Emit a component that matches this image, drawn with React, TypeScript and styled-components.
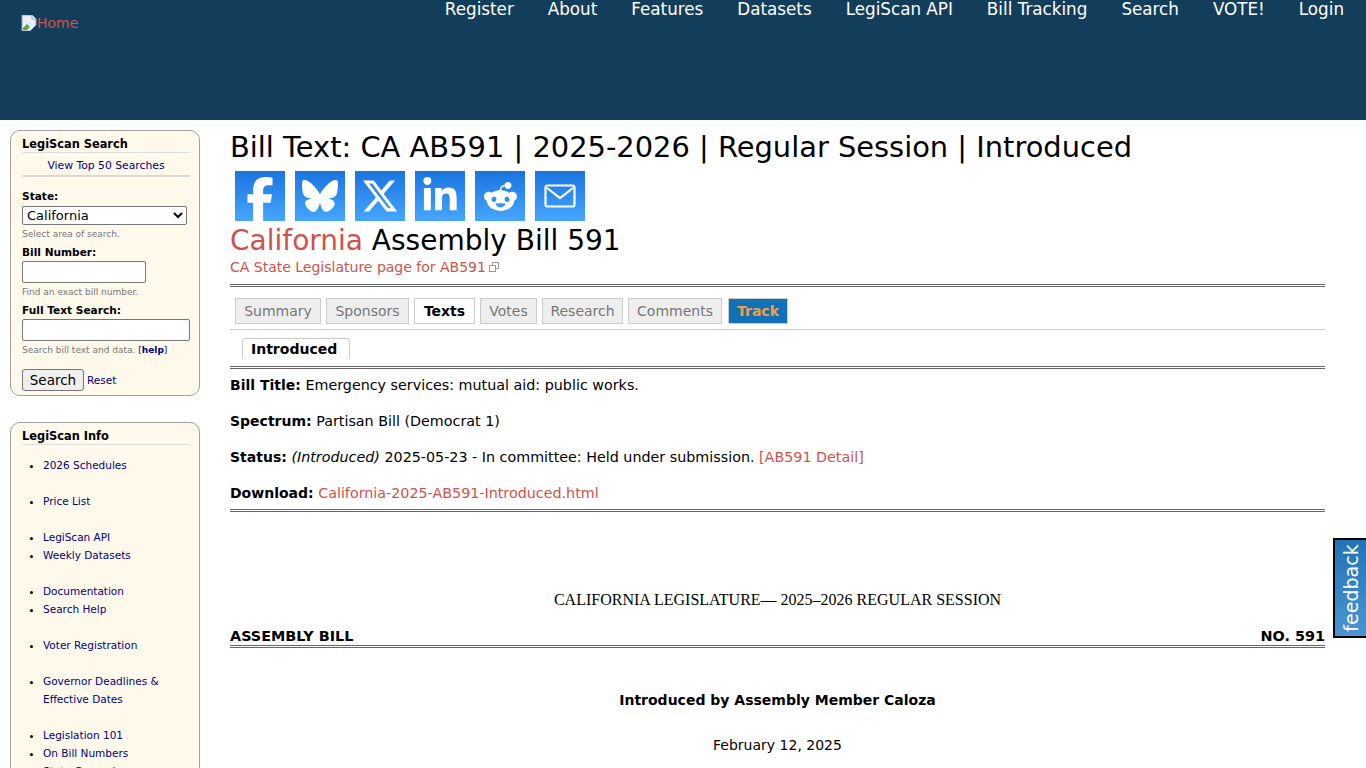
import React from "react";
import styled, { createGlobalStyle } from "styled-components";
import { FaFacebookF, FaBluesky, FaXTwitter, FaLinkedinIn, FaRedditAlien } from "react-icons/fa6";

const GlobalStyle = createGlobalStyle`
  html, body {
    margin: 0;
    padding: 0;
    height: 768px;
    overflow: hidden;
    background: #ffffff;
  }
  body {
    font-family: "DejaVu Sans", Verdana, sans-serif;
    font-size: 14px;
    line-height: 18px;
    color: #000000;
  }
`;

const navItems = ["Register", "About", "Features", "Datasets", "LegiScan API", "Bill Tracking", "Search", "VOTE!", "Login"];
const tabs = [
  { name: "Summary", width: 86 },
  { name: "Sponsors", width: 83 },
  { name: "Texts", width: 61 },
  { name: "Votes", width: 57 },
  { name: "Research", width: 81 },
  { name: "Comments", width: 94 },
];
const shareIcons = [
  { key: "fb", icon: <FaFacebookF size={44} />, low: true },
  { key: "bs", icon: <FaBluesky size={36} /> },
  { key: "x", icon: <FaXTwitter size={38} /> },
  { key: "li", icon: <FaLinkedinIn size={38} /> },
  { key: "rd", icon: <FaRedditAlien size={33} /> },
  {
    key: "mail",
    icon: (
      <svg width="32" height="24" viewBox="0 0 32 24" fill="none" stroke="#fff" strokeWidth="2.2">
        <rect x="1.5" y="1.5" width="29" height="21" rx="2" />
        <path d="M3 4l13 10L29 4" />
      </svg>
    ),
  },
];
const infoGroups = [
  ["2026 Schedules"],
  ["Price List"],
  ["LegiScan API", "Weekly Datasets"],
  ["Documentation", "Search Help"],
  ["Voter Registration"],
  ["Governor Deadlines & Effective Dates"],
  ["Legislation 101", "On Bill Numbers", "State General"],
];

export default function App() {
  return (
    <>
      <GlobalStyle />
      <Header>
        <HomeLink href="#">
          <BrokenImage viewBox="0 0 16 16">
            <path d="M1 0h10l4 4v6L9 16H1z" fill="#e8eefc" stroke="#9aa5b1" strokeWidth="1" />
            <path d="M2 13l4-4 3 3-3 3H2z" fill="#5aa93c" />
            <path d="M11 0v4h4" fill="#fff" stroke="#9aa5b1" />
          </BrokenImage>
          Home
        </HomeLink>
        <Nav>
          {navItems.map((item) => (
            <NavLink href="#" key={item}>{item}</NavLink>
          ))}
        </Nav>
      </Header>

      <Page>
        <Sidebar>
          <Box>
            <BoxTitle>LegiScan Search</BoxTitle>
            <TopSearches href="#">View Top 50 Searches</TopSearches>
            <FieldLabel $gap={13}>State:</FieldLabel>
            <StateSelect defaultValue="California">
              <option>California</option>
            </StateSelect>
            <Hint>Select area of search.</Hint>
            <FieldLabel $gap={6}>Bill Number:</FieldLabel>
            <TextInput $width={124} />
            <Hint>Find an exact bill number.</Hint>
            <FieldLabel $gap={6}>Full Text Search:</FieldLabel>
            <TextInput $width={168} />
            <Hint>Search bill text and data. <HelpLink href="#">[<b>help</b>]</HelpLink></Hint>
            <SearchRow>
              <SearchButton>Search</SearchButton>
              <SideLink href="#">Reset</SideLink>
            </SearchRow>
          </Box>
          <Box>
            <BoxTitle>LegiScan Info</BoxTitle>
            {infoGroups.map((group) => (
              <InfoList key={group[0]}>
                {group.map((item) => (
                  <li key={item}><SideLink href="#">{item}</SideLink></li>
                ))}
              </InfoList>
            ))}
          </Box>
        </Sidebar>

        <Main>
          <Title>Bill Text: CA AB591 | 2025-2026 | Regular Session | Introduced</Title>
          <ShareRow>
            {shareIcons.map((item) => (
              <ShareButton href="#" key={item.key} $low={item.low}>{item.icon}</ShareButton>
            ))}
          </ShareRow>
          <BillHeading><RedLink href="#">California</RedLink> Assembly Bill 591</BillHeading>
          <StateLink href="#">
            CA State Legislature page for AB591
            <ExtIcon viewBox="0 0 10 10">
              <rect x="3.5" y="0.5" width="6" height="6" fill="none" stroke="#999" />
              <rect x="0.5" y="3.5" width="6" height="6" fill="#fff" stroke="#999" />
            </ExtIcon>
          </StateLink>
          <DoubleRule $top={8} />
          <TabBar>
            {tabs.map((tab) => (
              <Tab key={tab.name} $active={tab.name === "Texts"} $width={tab.width}>{tab.name}</Tab>
            ))}
            <TrackTab>Track</TrackTab>
          </TabBar>
          <SubTabBar>
            <SubTab>Introduced</SubTab>
          </SubTabBar>
          <DoubleRule $top={0} />
          <Details>
            <p><b>Bill Title:</b> Emergency services: mutual aid: public works.</p>
            <p><b>Spectrum:</b> Partisan Bill (Democrat 1)</p>
            <p><b>Status:</b> <i>(Introduced)</i> 2025-05-23 - In committee: Held under submission. <RedLink href="#">[AB591 Detail]</RedLink></p>
            <p><b>Download:</b> <RedLink href="#">California-2025-AB591-Introduced.html</RedLink></p>
          </Details>
          <DoubleRule $top={7} />
          <Session>CALIFORNIA LEGISLATURE— 2025–2026 REGULAR SESSION</Session>
          <BillRow>
            <span>ASSEMBLY BILL</span>
            <span>NO. 591</span>
          </BillRow>
          <DoubleRule $top={0} />
          <Author>Introduced by Assembly Member Caloza</Author>
          <BillDate>February 12, 2025</BillDate>
        </Main>
      </Page>

      <Feedback href="#"><span>feedback</span></Feedback>
    </>
  );
}

const Header = styled.header`
  display: flex;
  justify-content: space-between;
  height: 120px;
  background: #133e5b;
  padding: 0 22px 0 21px;
`;

const HomeLink = styled.a`
  display: flex;
  align-items: center;
  align-self: flex-start;
  height: 16px;
  margin-top: 15px;
  color: #d0524a;
  font-size: 14px;
  text-decoration: none;
`;

const BrokenImage = styled.svg`
  width: 16px;
  height: 16px;
  flex: none;
`;

const Nav = styled.nav`
  display: flex;
  gap: 34px;
`;

const NavLink = styled.a`
  color: #ffffff;
  font-size: 16.75px;
  line-height: 19px;
  text-decoration: none;
`;

const Page = styled.div`
  display: flex;
  align-items: flex-start;
  gap: 30px;
  padding: 10px 41px 0 10px;
`;

const Sidebar = styled.aside`
  display: flex;
  flex-direction: column;
  gap: 26px;
  width: 190px;
  flex: none;
`;

const Box = styled.section`
  box-sizing: border-box;
  background: #fff9ec;
  border: 1px solid #a0a0a0;
  border-radius: 10px;
  padding: 5px 9px 4px 11px;
  font-size: 10.5px;
`;

const BoxTitle = styled.div`
  font-size: 11.4px;
  font-weight: bold;
  line-height: 15px;
  padding-top: 1px;
  border-bottom: 1px solid #dddddd;
`;

const TopSearches = styled.a`
  display: block;
  padding-top: 3px;
  text-align: center;
  color: #000080;
  font-size: 10.8px;
  text-decoration: none;
  line-height: 19px;
  border-bottom: 2px solid #d8d8d0;
`;

const FieldLabel = styled.div<{ $gap: number }>`
  font-weight: bold;
  font-size: 10.6px;
  line-height: 12px;
  margin-top: ${(p) => p.$gap}px;
`;

const StateSelect = styled.select`
  display: block;
  box-sizing: border-box;
  width: 165px;
  height: 19px;
  margin-top: 4px;
  padding: 0;
  font-family: "DejaVu Sans", sans-serif;
  font-size: 13px;
  background: #ffffff;
  border: 1px solid #767676;
  border-radius: 2px;
`;

const TextInput = styled.input<{ $width: number }>`
  display: block;
  box-sizing: border-box;
  width: ${(p) => p.$width}px;
  height: 22px;
  margin-top: 3px;
  background: #ffffff;
  border: 1px solid #767676;
  border-radius: 2px;
`;

const Hint = styled.div`
  font-size: 9px;
  line-height: 12px;
  margin-top: 3px;
  color: #777777;
`;

const HelpLink = styled.a`
  color: #000080;
  text-decoration: none;
`;

const SearchRow = styled.div`
  display: flex;
  align-items: center;
  gap: 3px;
  margin-top: 13px;
`;

const SearchButton = styled.button`
  box-sizing: border-box;
  width: 62px;
  height: 22px;
  padding: 0;
  font-family: "DejaVu Sans", sans-serif;
  font-size: 13.5px;
  background: #efefef;
  border: 1px solid #767676;
  border-radius: 3px;
`;

const SideLink = styled.a`
  color: #000080;
  font-size: 10.5px;
  text-decoration: none;
`;

const InfoList = styled.ul`
  margin: 11px 0 18px;
  padding: 0 0 0 21px;
  line-height: 18px;
`;

const Main = styled.main`
  flex: 1;
  min-width: 0;
`;

const Title = styled.h1`
  margin: 0;
  font-size: 28.9px;
  font-weight: normal;
  line-height: 34px;
`;

const BillHeading = styled.h2`
  margin: 3px 0 0;
  font-size: 28px;
  font-weight: normal;
  line-height: 34px;
`;

const ShareRow = styled.div`
  display: flex;
  gap: 10px;
  padding: 7px 0 0 5px;
`;

const ShareButton = styled.a<{ $low?: boolean }>`
  display: flex;
  align-items: ${(p) => (p.$low ? "flex-end" : "center")};
  justify-content: center;
  width: 50px;
  height: 50px;
  overflow: hidden;
  color: #ffffff;
  background: linear-gradient(#1a74e0, #46a6ff);
`;

const RedLink = styled.a`
  color: #d0524a;
  text-decoration: none;
`;

const StateLink = styled(RedLink)`
  display: block;
  line-height: 18px;
`;

const ExtIcon = styled.svg`
  width: 10px;
  height: 10px;
  margin-left: 3px;
`;

const DoubleRule = styled.div<{ $top: number }>`
  box-sizing: content-box;
  height: 1px;
  margin-top: ${(p) => p.$top}px;
  border-top: 1px solid #666666;
  border-bottom: 1px solid #666666;
`;

const TabBar = styled.div`
  display: flex;
  gap: 5px;
  padding: 11px 5px 5px;
  border-bottom: 1px solid #cccccc;
`;

const Tab = styled.div<{ $active: boolean; $width: number }>`
  box-sizing: border-box;
  width: ${(p) => p.$width}px;
  height: 26px;
  line-height: 25px;
  text-align: center;
  font-weight: ${(p) => (p.$active ? "bold" : "normal")};
  color: ${(p) => (p.$active ? "#000000" : "#777777")};
  background: ${(p) => (p.$active ? "#ffffff" : "#eeeeee")};
  border: 1px solid #cccccc;
`;

const TrackTab = styled.div`
  box-sizing: border-box;
  width: 60px;
  height: 26px;
  margin-left: 1px;
  line-height: 25px;
  text-align: center;
  font-weight: bold;
  color: #f0a040;
  background: #1070b8;
  border: 1px solid #cccccc;
`;

const SubTabBar = styled.div`
  display: flex;
  padding: 8px 0 7px 12px;
`;

const SubTab = styled.div`
  box-sizing: border-box;
  height: 21px;
  padding: 0 12px 0 8px;
  font-weight: bold;
  line-height: 20px;
  border: 1px solid #cccccc;
  border-bottom: none;
  border-radius: 4px 4px 0 0;
`;

const Details = styled.div`
  margin-top: 7px;
  font-size: 14.3px;
  & p {
    margin: 0 0 18px;
  }
  & p:last-child {
    margin-bottom: 0;
  }
  & b {
    font-size: 14px;
  }
`;

const Session = styled.div`
  margin-top: 79px;
  text-align: center;
  font-family: "Liberation Serif", serif;
  font-size: 16px;
`;

const BillRow = styled.div`
  display: flex;
  justify-content: space-between;
  margin-top: 18px;
  font-size: 14.4px;
  font-weight: bold;
`;

const Author = styled.div`
  margin-top: 43px;
  text-align: center;
  font-weight: bold;
`;

const BillDate = styled.div`
  margin-top: 27px;
  text-align: center;
`;

const Feedback = styled.a`
  position: fixed;
  right: 0;
  top: 538px;
  box-sizing: border-box;
  width: 33px;
  height: 100px;
  display: flex;
  align-items: center;
  justify-content: center;
  color: #ffffff;
  font-size: 19px;
  text-decoration: none;
  background: linear-gradient(#2273b5, #4a94d4);
  border: 2px solid #000000;
  border-right: none;
  & span {
    transform: rotate(-90deg);
    white-space: nowrap;
  }
`;
